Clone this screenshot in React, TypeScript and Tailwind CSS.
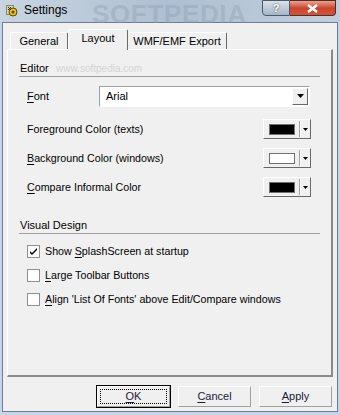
import React from 'react';

const font = { fontFamily: '"Liberation Sans", Arial, sans-serif' };

// underline the mnemonic letter like a classic win32 dialog
const Mn = ({ children }: { children: React.ReactNode }) => (
  <span className="underline underline-offset-[2px]">{children}</span>
);

const GroupHeader = ({ label }: { label: string }) => (
  <div>
    <div className="pl-[1px] text-[11px] leading-[13px] text-black">{label}</div>
    <div className="mt-[1px] border-t border-[#a0a0a0]" />
  </div>
);

const ColorButton = ({ color }: { color: string }) => (
  <div className="w-[48px] h-[20px] border-t border-l border-white border-r border-b border-r-[#696969] border-b-[#696969] bg-[#f0f0f0] flex items-center">
    <div className="ml-[5px] w-[26px] h-[11px] border border-[#707070]" style={{ background: color }} />
    <div className="ml-[4px] h-[16px] border-l border-[#a0a0a0] border-r border-r-white" />
    <svg width="5" height="3" className="ml-[2px]" viewBox="0 0 5 3">
      <path d="M0 0h5L2.5 3z" fill="#000" />
    </svg>
  </div>
);

const ColorRow = ({ label, color, mt }: { label: React.ReactNode; color: string; mt: string }) => (
  <div className={`flex items-center justify-between pl-[8px] pr-[9px] h-[20px] ${mt}`}>
    <span className="text-[10.7px] leading-[13px] text-black">{label}</span>
    <ColorButton color={color} />
  </div>
);

const Check = ({ checked, label, mt }: { checked?: boolean; label: React.ReactNode; mt: string }) => (
  <div className={`flex items-center pl-[8px] h-[13px] ${mt}`}>
    <div className="w-[13px] h-[13px] bg-white border border-[#8e8f8f] flex items-center justify-center">
      {checked && (
        <svg width="9" height="9" viewBox="0 0 9 9">
          <path d="M1 4l2 2 5-5v2L3 8 1 6z" fill="#000" />
        </svg>
      )}
    </div>
    <span className="ml-[5px] text-[10.7px] leading-[13px] text-black">{label}</span>
  </div>
);

const DlgButton = ({ children, def }: { children: React.ReactNode; def?: boolean }) => (
  <div className={`w-[75px] h-[23px] ${def ? 'border border-black' : 'border border-transparent'}`}>
    <div className="w-full h-full border-t border-l border-white border-r border-b border-r-[#a0a0a0] border-b-[#a0a0a0] bg-[#f0f0f0] flex items-center justify-center">
      <div className={`w-[67px] h-[15px] flex items-center justify-center text-[11px] leading-[13px] text-[#1a1a3a] ${def ? 'border border-dotted border-black' : ''}`}>
        {children}
      </div>
    </div>
  </div>
);

const TitleIcon = () => (
  <svg width="13" height="13" viewBox="0 0 13 13">
    <rect x="1" y="1" width="8" height="10" fill="#8a8a60" />
    <path d="M2 2h6v8H2z" fill="#d8d8b0" />
    <circle cx="8" cy="8" r="4" fill="#e8c020" stroke="#5a4a00" strokeWidth="1" />
    <circle cx="8" cy="8" r="1.5" fill="#5a4a00" />
    <path d="M3 3l3 3M6 3L3 6" stroke="#303030" strokeWidth="1" />
  </svg>
);

export default function App() {
  return (
    <div
      className="w-[340px] h-[415px] overflow-hidden flex flex-col bg-[#c3d6ec]"
      style={font}
    >
      {/* Title bar */}
      <div className="h-[22px] flex items-start justify-between bg-gradient-to-r from-[#c9d5e1] via-[#aebfd1] to-[#c0cfde] relative">
        <div className="flex items-center h-[20px] pl-[5px] gap-[6px]">
          <TitleIcon />
          <span className="text-[12px] leading-[14px] text-black">Settings</span>
        </div>
        <span className="absolute left-[92px] top-[-5px] text-[26px] font-bold text-[#8b9db1]/40 tracking-wide">SOFTPEDIA</span>
        <div className="flex mr-[4px] relative">
          <div className="w-[28px] h-[16px] border border-[#4a5a6c] rounded-bl-[4px] bg-gradient-to-b from-[#d9e2ec] to-[#a5b5c6] flex items-center justify-center text-white text-[11px] font-bold leading-[12px]" style={{ textShadow: '0 0 2px #333' }}>
            ?
          </div>
          <div className="w-[46px] h-[16px] border border-l-0 border-[#5a2a22] rounded-br-[4px] bg-gradient-to-b from-[#e8a393] via-[#c9462e] to-[#d0553a] flex items-center justify-center">
            <svg width="11" height="9" viewBox="0 0 11 9">
              <path d="M1 1l9 7M10 1L1 8" stroke="#fff" strokeWidth="2.4" />
            </svg>
          </div>
        </div>
      </div>

      {/* Client area */}
      <div className="mx-[2px] mb-[3px] flex-1 border border-[#6f7e8e] bg-[#f0f0f0] pl-[4px] pt-[6px]">
        {/* Tabs */}
        <div className="flex items-end h-[20px] pl-[3px] relative z-10 text-[11px] leading-[13px] text-black">
          <div className="w-[58px] h-[17px] border-t border-l border-white border-r border-r-[#696969] rounded-t-[2px] flex items-center justify-center">
            General
          </div>
          <div className="w-[60px] h-[21px] -mb-[1px] bg-[#f0f0f0] border-t border-l border-white border-r border-r-[#696969] rounded-t-[2px] flex items-start justify-center pt-[2px]">
            Layout
          </div>
          <div className="w-[99px] h-[17px] border-t border-white border-r border-r-[#696969] rounded-t-[2px] flex items-center justify-center">
            WMF/EMF Export
          </div>
        </div>

        {/* Tab page */}
        <div className="w-[326px] h-[328px] border-t border-l border-white border-r-2 border-b-2 border-r-[#8a8a8a] border-b-[#8a8a8a] px-[11px] pt-[12px] relative">
          <span className="absolute left-[48px] top-[11px] text-[10px] text-[#d4d4d4]">www.softpedia.com</span>
          <GroupHeader label="Editor" />

          <div className="flex items-center h-[20px] mt-[9px] pl-[8px] pr-[10px]">
            <span className="w-[72px] text-[11px] leading-[13px] text-black">
              <Mn>F</Mn>ont
            </span>
            <div className="flex-1 h-[21px] bg-white border border-[#a0a0a0] border-r-white border-b-white flex items-center justify-between">
              <span className="pl-[6px] text-[11px] leading-[13px] text-black">Arial</span>
              <div className="w-[16px] h-[17px] mr-[1px] bg-[#f0f0f0] border-t border-l border-white border-r border-b border-r-[#696969] border-b-[#696969] flex items-center justify-center">
                <svg width="7" height="4" viewBox="0 0 7 4">
                  <path d="M0 0h7L3.5 4z" fill="#000" />
                </svg>
              </div>
            </div>
          </div>

          <ColorRow label={<>Foreground Color (texts)</>} color="#000" mt="mt-[13px]" />
          <ColorRow label={<><Mn>B</Mn>ackground Color (windows)</>} color="#fff" mt="mt-[9px]" />
          <ColorRow label={<><Mn>C</Mn>ompare Informal Color</>} color="#000" mt="mt-[9px]" />

          <div className="mt-[22px]">
            <GroupHeader label="Visual Design" />
          </div>

          <Check checked mt="mt-[11px]" label={<>Show <Mn>S</Mn>plashScreen at startup</>} />
          <Check mt="mt-[11px]" label={<><Mn>L</Mn>arge Toolbar Buttons</>} />
          <Check mt="mt-[11px]" label={<><Mn>A</Mn>lign 'List Of Fonts' above Edit/Compare windows</>} />
        </div>

        {/* Buttons */}
        <div className="flex justify-end gap-[6px] mt-[8px] w-[326px]">
          <DlgButton def>
            <Mn>O</Mn>K
          </DlgButton>
          <DlgButton>
            <Mn>C</Mn>ancel
          </DlgButton>
          <DlgButton>
            <Mn>A</Mn>pply
          </DlgButton>
        </div>
      </div>
    </div>
  );
}
